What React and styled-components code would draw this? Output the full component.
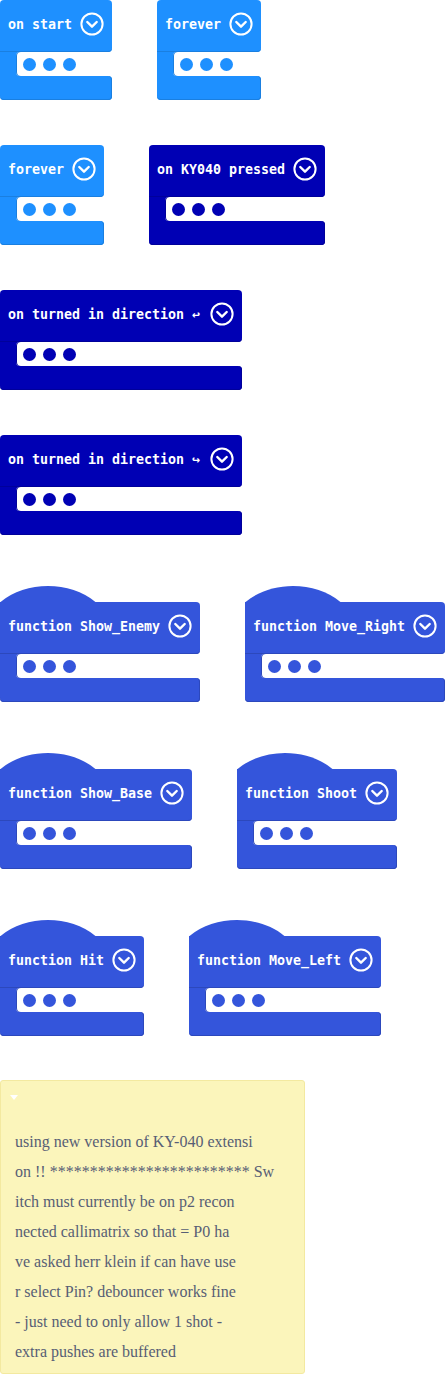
import React from "react";
import styled, { createGlobalStyle } from "styled-components";

const Global = createGlobalStyle`
  html, body { margin: 0; padding: 0; background: #ffffff; }
  body { width: 445px; overflow: hidden; }
`;

const Canvas = styled.div`
  display: flex;
  flex-direction: column;
  gap: 45px;
  width: 445px;
`;

const Row = styled.div`
  display: flex;
  gap: 45px;
  align-items: flex-start;
  margin-top: ${(p) => (p.$hat ? "5px" : "0")};
`;

const BlockWrap = styled.div`
  display: flex;
  flex-direction: column;
  width: ${(p) => p.$w}px;
  flex: none;
`;

const Hat = styled.svg`
  display: block;
  width: 96px;
  height: 17px;
`;

const Header = styled.div`
  height: 52px;
  box-sizing: border-box;
  padding: 0 8px 4px 8px;
  display: flex;
  align-items: center;
  background: ${(p) => p.$c};
  border-radius: ${(p) => (p.$hat ? "0 4px 4px 0" : "4px 4px 4px 0")};
  box-shadow: inset 0 -1px 0 ${(p) => p.$edge};
`;

const Label = styled.span`
  font-family: "DejaVu Sans Mono", "Liberation Mono", monospace;
  font-weight: bold;
  font-size: 13.3px;
  color: #ffffff;
  white-space: nowrap;
`;

const DropIcon = styled.svg`
  display: block;
  width: 24px;
  height: 24px;
  margin-left: auto;
  flex: none;
`;

const Middle = styled.div`
  height: 24px;
  display: flex;
  background: linear-gradient(to right, ${(p) => p.$c} 0, ${(p) => p.$c} 22px, transparent 22px);
`;

const Slot = styled.div`
  margin-left: 16px;
  flex: 1;
  background: #ffffff;
  border-radius: 4px 0 0 4px;
  display: flex;
  align-items: center;
  gap: 7px;
  padding-left: 7px;
  box-shadow: inset 1px 0 0 ${(p) => p.$edge};
`;

const Dot = styled.span`
  width: 13px;
  height: 13px;
  border-radius: 50%;
  background: ${(p) => p.$c};
  flex: none;
`;

const Bottom = styled.div`
  height: 24px;
  background: ${(p) => p.$c};
  border-radius: 0 4px 4px 4px;
  box-shadow: inset 0 -1px 0 ${(p) => p.$edge}, inset -1px 0 0 ${(p) => p.$edge};
`;

const Comment = styled.div`
  margin-top: -1px;
  width: 305px;
  height: 294px;
  box-sizing: border-box;
  background: #fbf5bb;
  border: 1px solid #f3e9a0;
  border-radius: 3px;
  display: flex;
  flex-direction: column;
`;

const CommentTop = styled.div`
  height: 31px;
  box-sizing: border-box;
  padding: 14px 0 0 9px;
`;

const Triangle = styled.span`
  display: block;
  width: 0;
  height: 0;
  border-left: 4.5px solid transparent;
  border-right: 4.5px solid transparent;
  border-top: 5px solid #ffffff;
`;

const CommentBody = styled.div`
  padding: 15px 0 0 14px;
  font-family: "Liberation Serif", "Times New Roman", serif;
  font-size: 16px;
  line-height: 30px;
  color: #575e75;
`;

const Line = styled.div`
  white-space: nowrap;
`;

const PALETTE = {
  basic: { c: "#1e90ff", edge: "#1a7fe0" },
  ky: { c: "#0000b4", edge: "#00009a" },
  fn: { c: "#3455db", edge: "#2c48bc" },
};

function Chevron() {
  return (
    <DropIcon viewBox="0 0 24 24">
      <circle cx="12" cy="12" r="10.6" fill="none" stroke="#ffffff" strokeWidth="2" />
      <polyline
        points="7.3,10 12,14.7 16.7,10"
        fill="none"
        stroke="#ffffff"
        strokeWidth="2.4"
        strokeLinecap="round"
        strokeLinejoin="round"
      />
    </DropIcon>
  );
}

function Block({ label, kind, width, hat }) {
  const { c, edge } = PALETTE[kind];
  return (
    <BlockWrap $w={width}>
      {hat && (
        <Hat viewBox="0 0 96 17">
          <path d="M0 17.5 C25 -4.5 71 -4.5 96 17.5 Z" fill={c} />
        </Hat>
      )}
      <Header $c={c} $edge={edge} $hat={hat}>
        <Label>{label}</Label>
        <Chevron />
      </Header>
      <Middle $c={c}>
        <Slot $edge={edge}>
          <Dot $c={c} />
          <Dot $c={c} />
          <Dot $c={c} />
        </Slot>
      </Middle>
      <Bottom $c={c} $edge={edge} />
    </BlockWrap>
  );
}

const rows = [
  {
    blocks: [
      { label: "on start", kind: "basic", width: 112 },
      { label: "forever", kind: "basic", width: 104 },
    ],
  },
  {
    blocks: [
      { label: "forever", kind: "basic", width: 104 },
      { label: "on KY040 pressed", kind: "ky", width: 176 },
    ],
  },
  { blocks: [{ label: "on turned in direction \u21A9", kind: "ky", width: 242 }] },
  { blocks: [{ label: "on turned in direction \u21AA", kind: "ky", width: 242 }] },
  {
    hat: true,
    blocks: [
      { label: "function Show_Enemy", kind: "fn", width: 200 },
      { label: "function Move_Right", kind: "fn", width: 200 },
    ],
  },
  {
    hat: true,
    blocks: [
      { label: "function Show_Base", kind: "fn", width: 192 },
      { label: "function Shoot", kind: "fn", width: 160 },
    ],
  },
  {
    hat: true,
    blocks: [
      { label: "function Hit", kind: "fn", width: 144 },
      { label: "function Move_Left", kind: "fn", width: 192 },
    ],
  },
];

const commentLines = [
  "using new version of KY-040 extensi",
  "on !! " + "*".repeat(25) + " Sw",
  "itch must currently be on p2 recon",
  "nected callimatrix so that = P0 ha",
  "ve asked herr klein if can have use",
  "r select Pin? debouncer works fine",
  "- just need to only allow 1 shot -",
  "extra pushes are buffered",
];

export default function App() {
  return (
    <>
      <Global />
      <Canvas>
        {rows.map((r, i) => (
          <Row key={i} $hat={r.hat}>
            {r.blocks.map((b, j) => (
              <Block key={j} {...b} hat={r.hat} />
            ))}
          </Row>
        ))}
        <Comment>
          <CommentTop>
            <Triangle />
          </CommentTop>
          <CommentBody>
            {commentLines.map((l, i) => (
              <Line key={i}>{l}</Line>
            ))}
          </CommentBody>
        </Comment>
      </Canvas>
    </>
  );
}
